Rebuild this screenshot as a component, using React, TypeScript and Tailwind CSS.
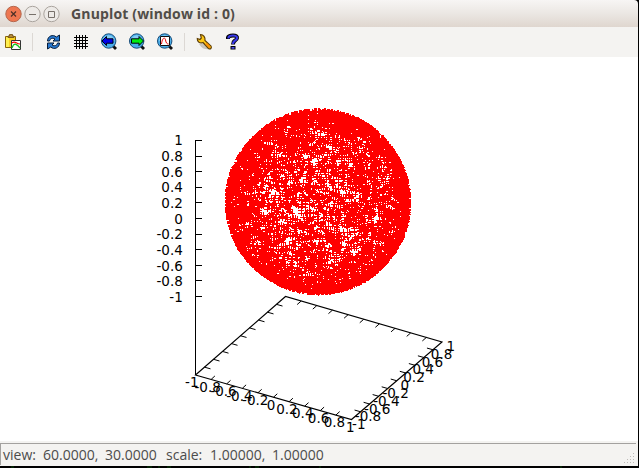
import React from "react";

const TICKS = ["-1", "-0.8", "-0.6", "-0.4", "-0.2", "0", "0.2", "0.4", "0.6", "0.8", "1"];
const STEPS = TICKS.map((_, i) => i);

// Random points on the unit sphere, each drawn as a small plus marker.
function spherePath(count: number): string {
  let seed = 90210;
  const rand = () => {
    seed = (Math.imul(seed, 1664525) + 1013904223) >>> 0;
    return seed / 4294967296;
  };
  let d = "";
  for (let i = 0; i < count; i++) {
    const z = rand() * 2 - 1;
    const a = rand() * Math.PI * 2;
    const r = Math.sqrt(1 - z * z);
    const x = Math.round(318 + 90.5 * r * Math.cos(a));
    const y = Math.round(144.8 + 90.8 * z);
    d += `M${x - 3} ${y}h6v1h-6zM${x} ${y - 3}h1v6h-1z`;
  }
  return d;
}

const SPHERE = spherePath(6600);

function Plot() {
  return (
    <svg width="638" height="384" viewBox="0 0 638 384" className="block font-['DejaVu_Sans',sans-serif] text-[13.5px]">
      <path d={SPHERE} fill="#ff0000" shapeRendering="crispEdges" />
      <g stroke="#000" strokeWidth="1" fill="none">
        <path d="M195.5 83.5V318" />
        {STEPS.map((i) => (
          <path key={i} d={`M195 ${Math.round(239 - i * 15.6) + 0.5}h7`} />
        ))}
        <path d="M195.5 318L285.5 239.5L442 285L351.5 362.5Z" strokeWidth="1.15" />
        {STEPS.slice(1, 10).map((i) => (
          <g key={i}>
            <path d={`M${195.5 + 15.6 * i} ${318 + 4.45 * i}l3.8 -3.5`} />
            <path d={`M${285.5 + 15.65 * i} ${239.5 + 4.55 * i}l-4 3.5`} />
            <path d={`M${195.5 + 9 * i} ${318 - 7.85 * i}l6 1.7`} />
            <path d={`M${351.5 + 9.05 * i} ${362.5 - 7.75 * i}l-6 -1.7`} />
          </g>
        ))}
      </g>
      <g fill="#000">
        {TICKS.map((t, i) => (
          <React.Fragment key={t}>
            <text x="182.8" y={244.8 - i * 15.65} textAnchor="end">{t}</text>
            <text x={191.8 + 15.85 * i} y={330.3 + 4.45 * i} textAnchor="middle">{t}</text>
            <text x={358.8 + 9.2 * i} y={372.3 - 7.83 * i} textAnchor="middle">{t}</text>
          </React.Fragment>
        ))}
      </g>
    </svg>
  );
}

function Lens({ children }: { children: React.ReactNode }) {
  return (
    <svg width="18" height="18" viewBox="0 0 18 18" className="block">
      <path d="M13 13l3 3" stroke="#111" strokeWidth="2.8" />
      <circle cx="8.7" cy="8" r="7.2" fill="#4aaeea" stroke="#174b78" strokeWidth="1" />
      <path d="M3 8a5.7 5.7 0 0 1 11.4 0" fill="#83cdf5" />
      {children}
    </svg>
  );
}

function Toolbar() {
  return (
    <div className="flex h-[30px] shrink-0 items-center bg-[#f4f3f1] pl-[4px]">
      <svg width="18" height="18" viewBox="0 0 18 18" className="block">
        <path d="M1.5 3.5h10v11h-10z" fill="#f8cf20" stroke="#8a6508" />
        <path d="M2 4h3v10H2z" fill="#fff050" />
        <path d="M4 4.5V3h1.5V1.5h3V3H10v1.5z" fill="#b58a38" stroke="#6b4a10" strokeWidth=".8" />
        <path d="M7.5 7.5h9v9h-9z" fill="#fff" stroke="#333" />
        <path d="M8 10c3-3 4 1 8 1" fill="none" stroke="#f00" strokeWidth="1.2" />
        <path d="M8 15c2-6 5-4 8 0" fill="none" stroke="#15c51c" strokeWidth="1.3" />
      </svg>
      <div className="ml-[10px] h-[18px] w-px bg-[#dcd8d4]" />
      <svg width="18" height="18" viewBox="0 0 18 18" className="ml-[12px] block">
        <path d="M2.5 8C2.5 3 8 1 11.3 4L14.5 2v6H8l2-2C7.5 4.5 5 5.5 4.5 8z" fill="#2878cf" stroke="#071c38" />
        <path d="M14.5 10C14.5 15 9 17 5.7 14L2.5 16v-6H9l-2 2c2.5 1.5 5 .5 5.5-2z" fill="#2878cf" stroke="#071c38" />
      </svg>
      <svg width="16" height="16" viewBox="0 0 16 16" className="ml-[10px] block" shapeRendering="crispEdges">
        <path d="M3.5 1v14M6.5 1v14M9.5 1v14M12.5 1v14M1 3.5h14M1 6.5h14M1 9.5h14M1 12.5h14" stroke="#000" />
      </svg>
      <div className="ml-[11px] flex gap-[10px]">
        <Lens><path d="M2 8l4.5-4.5v2.300H13v4.400H6.500V12.500z" fill="#0000e8" stroke="#001" /></Lens>
        <Lens><path d="M15.500 8L11 3.500v2.300H3.500v4.400H11v2.300z" fill="#00ee10" stroke="#001" /></Lens>
        <Lens>
          <path d="M4.5 3.5h9v9h-9z" fill="#fff" stroke="#111" />
          <path d="M5.5 11C6.5 4 9 4 9.5 7s1.5 4 3 4" fill="none" stroke="#e00" />
        </Lens>
      </div>
      <div className="ml-[10px] h-[18px] w-px bg-[#dcd8d4]" />
      <svg width="18" height="18" viewBox="0 0 18 18" className="ml-[11px] block">
        <path d="M3 11c3 5 7 6 11 5l-6-6z" fill="#c9c5bd" />
        <path d="M4.5 1.5l.8 3.500-1.300 1.500L1.300 5.500C1 9 4 10.500 7 9.500l5.500 6c2 1.300 3.500-.5 2.500-2.500L9 7.500C9.500 4.500 7.500 1.500 4.500 1.500z" fill="#ffc814" stroke="#604006" strokeWidth="1.200" />
        <path d="M10 10.500l4 4" stroke="#ff9100" strokeWidth="2" />
      </svg>
      <svg width="14" height="18" viewBox="0 0 14 18" className="ml-[12px] block">
        <path d="M2 6V4.500Q2.500 2.500 7 2.500T11 5Q11 6.500 8.500 8Q7 9 7 11.500" fill="none" stroke="#000" strokeWidth="4" />
        <path d="M4.500 13h5v3.500h-5z" fill="#000" />
        <path d="M2.500 5.500V4.500Q3 2.500 7 2.500T11 5Q11 6.500 8.500 8Q7 9 7 11" fill="none" stroke="#3838e8" strokeWidth="2.200" />
        <path d="M5.500 14h3v1.700h-3z" fill="#4848e8" />
      </svg>
    </div>
  );
}

function TitleBar() {
  return (
    <div className="flex h-[27px] shrink-0 items-center rounded-tr-[4px] bg-linear-to-b from-[#f7f5f4] via-[#ebe7e3] to-[#dfd6cf] pl-[5px]">
      <svg width="58" height="20" viewBox="0 0 58 20" className="block">
        <circle cx="8.5" cy="10" r="7.7" fill="#ee7650" stroke="#b5684e" />
        <path d="M6 7.5l5 5M11 7.5l-5 5" stroke="#4d3027" strokeWidth="1.2" />
        <circle cx="27.5" cy="10" r="7.7" fill="#edeae7" stroke="#aaa49e" />
        <path d="M24 10.5h7" stroke="#77706a" />
        <circle cx="46.5" cy="10" r="7.7" fill="#edeae7" stroke="#aaa49e" />
        <path d="M43.5 7.5h6v6h-6z" fill="none" stroke="#77706a" />
      </svg>
      <span className="ml-[8px] whitespace-pre font-['Open_Sans',sans-serif] text-[14px] font-bold leading-5 tracking-[0.15px] text-[#514d48]">
        Gnuplot (window id : 0)
      </span>
    </div>
  );
}

export default function App() {
  return (
    <div className="flex h-[468px] w-[639px] flex-col overflow-hidden bg-black pr-px">
      <TitleBar />
      <Toolbar />
      <div className="h-[384px] shrink-0 bg-white"><Plot /></div>
      <div className="h-[25px] shrink-0 bg-[#f4f3f1] pr-[2px] pt-[2px]">
        <div className="flex h-[22px] items-center justify-between border-l border-t border-[#a3a19f] pl-[2px]">
          <div className="flex whitespace-pre font-['Open_Sans',sans-serif] text-[14px] leading-5 text-[#4c4c4c]">
            <span className="w-[40px]">view:</span>
            <span className="w-[62px]">60.0000,</span>
            <span className="w-[61px]">30.0000</span>
            <span className="w-[44px]">scale:</span>
            <span className="w-[62px]">1.00000,</span>
            <span>1.00000</span>
          </div>
          <svg width="14" height="14" viewBox="0 0 14 14" className="block self-end" shapeRendering="crispEdges">
            <path d="M2 11h1v1H2zM5 11h1v1H5zM8 11h1v1H8zM11 11h1v1h-1zM5 8h1v1H5zM8 8h1v1H8zM11 8h1v1h-1zM8 5h1v1H8zM11 5h1v1h-1zM11 2h1v1h-1z" fill="#bdbab7" />
          </svg>
        </div>
      </div>
      <svg width="638" height="2" viewBox="0 0 638 2" className="block shrink-0">
        <path d="M11 1h3M147 1h5M158 1h2M167 1h4M249 1h2M255 1h4M319 1h2M560 1h2" stroke="#064006" />
      </svg>
    </div>
  );
}
